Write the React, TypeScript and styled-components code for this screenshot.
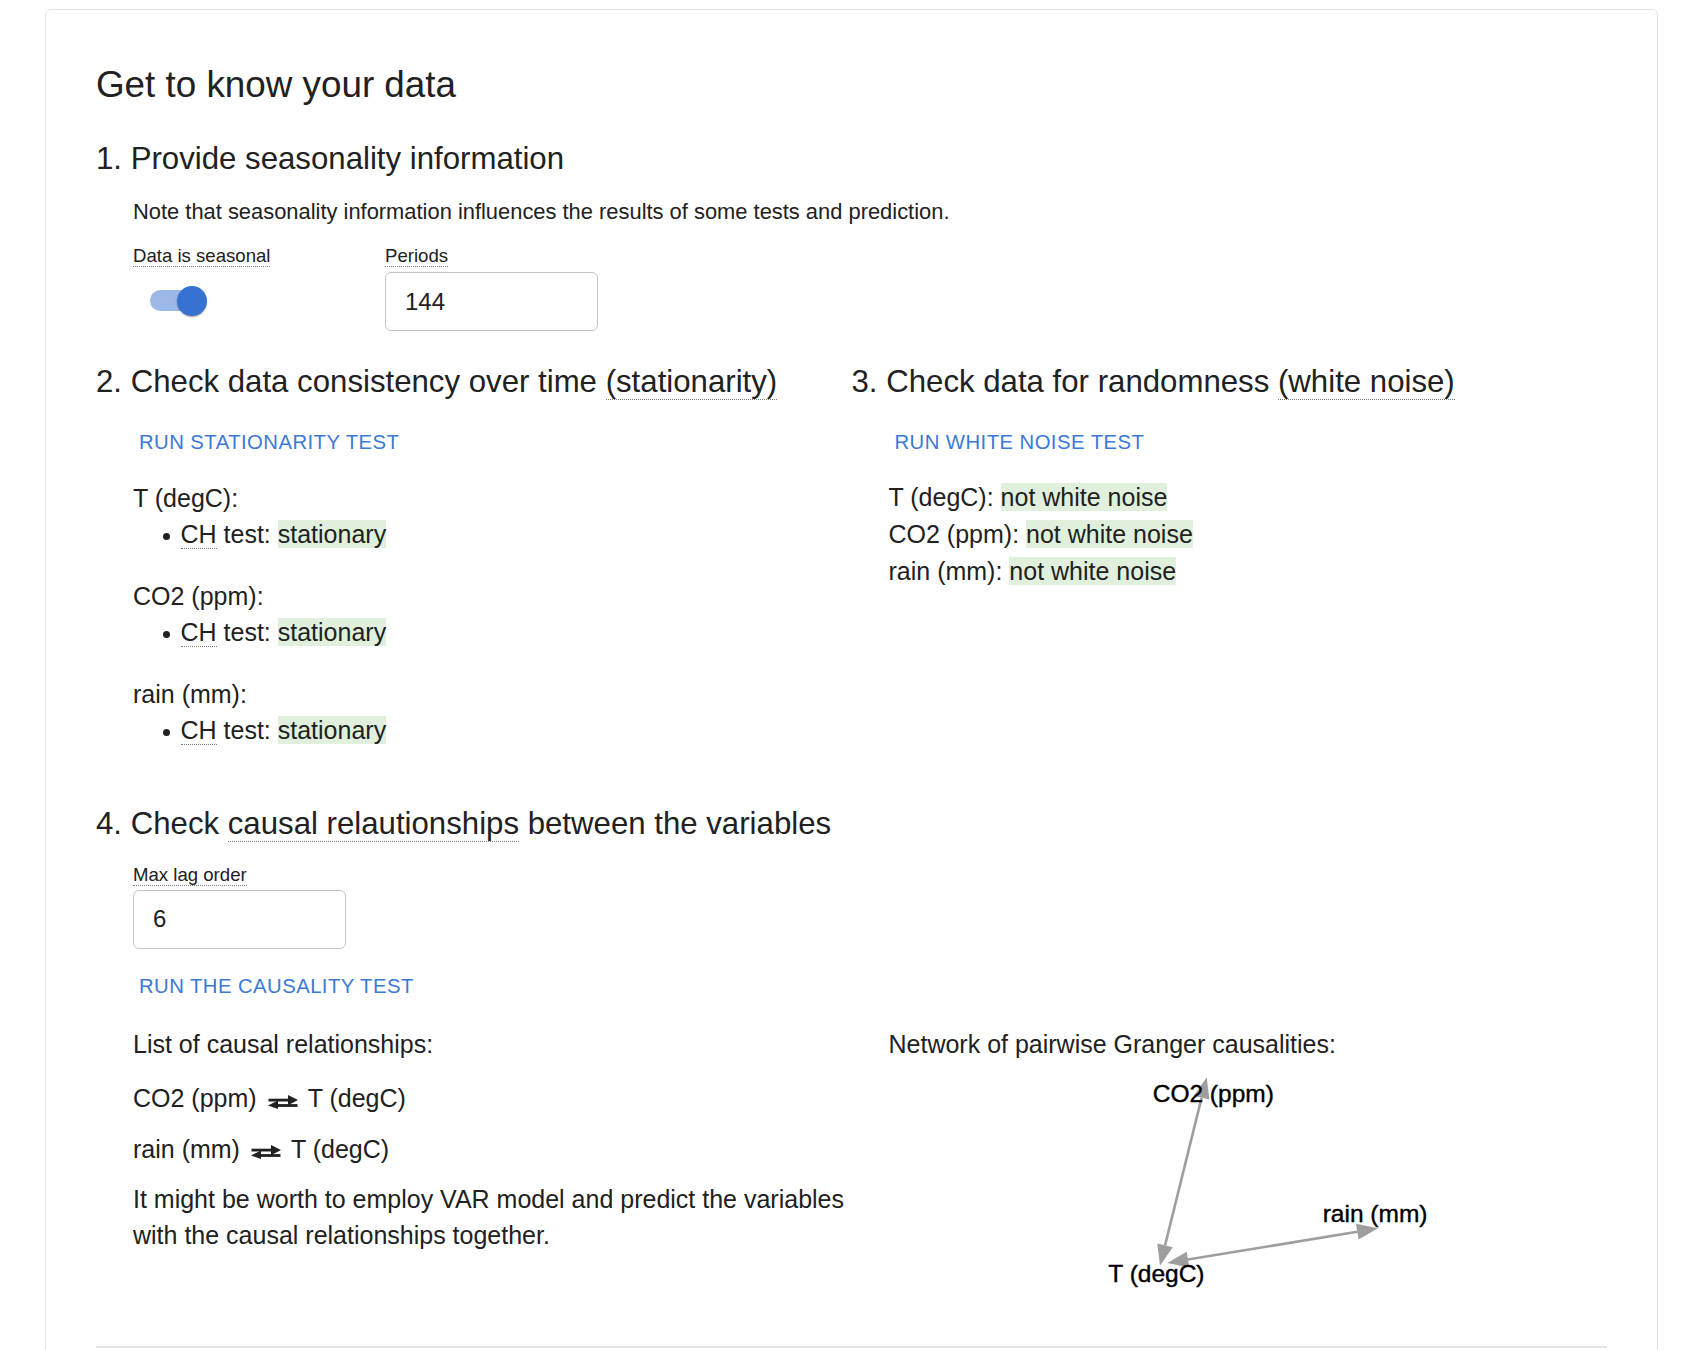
import React from "react";
import styled, { createGlobalStyle } from "styled-components";

const FONT = `"Liberation Sans", Arial, Helvetica, sans-serif`;

const GlobalStyle = createGlobalStyle`
  html, body {
    margin: 0;
    padding: 0;
    background: #ffffff;
    overflow: hidden;
  }
  body {
    font-family: ${FONT};
    color: #212121;
  }
  * { box-sizing: border-box; }
`;

const Page = styled.div`
  padding: 9px 48px 0 45px;
`;

const Card = styled.section`
  background: #fff;
  border: 1px solid #e3e3e3;
  border-radius: 6px;
  padding: 53px 50px 40px;
`;

const Title = styled.h1`
  margin: 0;
  font-size: 36.8px;
  line-height: 44px;
  font-weight: 400;
  color: #212121;
`;

const Heading = styled.h2<{ $mt: number }>`
  margin: ${(p) => p.$mt}px 0 0;
  font-size: 31.2px;
  line-height: 38px;
  font-weight: 400;
  color: #212121;
  white-space: nowrap;
`;

const Dotted = styled.span`
  border-bottom: 1px dotted #7d7d7d;
`;

const Note = styled.p`
  margin: 19px 0 0;
  padding-left: 37px;
  font-size: 21.9px;
  line-height: 30px;
`;

const FieldRow = styled.div<{ $mt: number }>`
  display: flex;
  align-items: flex-start;
  margin-top: ${(p) => p.$mt}px;
  padding-left: 37px;
`;

const Field = styled.div<{ $width?: number }>`
  display: flex;
  flex-direction: column;
  align-items: flex-start;
  width: ${(p) => (p.$width ? `${p.$width}px` : "auto")};
`;

const FieldLabel = styled.div`
  font-size: 18.6px;
  line-height: 22px;
  color: #212121;
`;

const SwitchTrack = styled.span`
  position: relative;
  display: block;
  width: 51px;
  height: 21px;
  margin: 23px 0 0 17px;
  border-radius: 10.5px;
  background: #9bb8e6;
`;

const SwitchThumb = styled.span`
  position: absolute;
  top: -4.5px;
  left: 27.3px;
  width: 30px;
  height: 30px;
  border-radius: 50%;
  background: #3672cf;
  box-shadow: 0 2px 1px -1px rgba(0, 0, 0, 0.2), 0 1px 1px rgba(0, 0, 0, 0.14),
    0 1px 3px rgba(0, 0, 0, 0.12);
`;

const TextInput = styled.input<{ $mt: number }>`
  display: block;
  margin-top: ${(p) => p.$mt}px;
  width: 213px;
  height: 59px;
  padding: 0 0 0 19px;
  border: 1px solid #c4c4c4;
  border-radius: 6px;
  background: #fff;
  font-family: ${FONT};
  font-size: 24px;
  color: #212121;
  outline: none;
`;

const Columns = styled.div<{ $mt: number }>`
  display: grid;
  grid-template-columns: 1fr 1fr;
  margin-top: ${(p) => p.$mt}px;
`;

const Column = styled.div``;

const TextButton = styled.button<{ $mt: number }>`
  display: block;
  margin: ${(p) => p.$mt}px 0 0 37px;
  padding: 6px;
  border: 0;
  background: none;
  color: #3b79d6;
  font-family: ${FONT};
  font-size: 20.3px;
  line-height: 30px;
  letter-spacing: 0.45px;
  text-transform: uppercase;
  cursor: pointer;
`;

const Body = styled.div<{ $mt: number; $lh?: number }>`
  margin-top: ${(p) => p.$mt}px;
  padding-left: 37px;
  font-size: 25px;
  line-height: ${(p) => p.$lh ?? 36}px;
  color: #212121;
`;

const VarBlock = styled.div`
  margin-bottom: 26px;
`;

const Bullets = styled.ul`
  list-style: none;
  margin: 0;
  padding-left: 30px;
`;

const Bullet = styled.li`
  &::before {
    content: "";
    display: inline-block;
    width: 7px;
    height: 7px;
    margin-right: 10.5px;
    border-radius: 50%;
    background: #212121;
    vertical-align: middle;
  }
`;

const Highlight = styled.span`
  background: #e0f0dc;
`;

const Line = styled.div``;

const Para = styled.p<{ $mt: number }>`
  margin: ${(p) => p.$mt}px 0 0;
`;

const SwapIcon = styled.svg`
  width: 30px;
  height: 14px;
  margin: 0 9.5px 0 11.5px;
  vertical-align: -1.5px;
`;

const Graph = styled.svg`
  display: block;
  margin-top: 6.3px;
  overflow: visible;
`;

const Divider = styled.div`
  margin-top: 37px;
  border-top: 2px solid #e4e4e4;
`;

const Swap = () => (
  <SwapIcon viewBox="0 0 30 14" aria-hidden="true">
    <rect x="0.5" y="3.7" width="21" height="2.8" fill="#212121" />
    <polygon points="20,0 30,5.1 20,10.2" fill="#212121" />
    <rect x="8.5" y="9.1" width="21" height="2.8" fill="#212121" />
    <polygon points="10,5.4 0,10.5 10,14" fill="#212121" />
  </SwapIcon>
);

const EDGE = "#9e9e9e";

const CausalGraph = () => (
  <Graph width="718" height="240" viewBox="0 0 718 240">
    <line x1="312.65" y1="28.68" x2="276.05" y2="176.32" stroke={EDGE} strokeWidth="2.6" />
    <polygon points="317.7,8.3 320.4,30.6 304.9,26.8" fill={EDGE} />
    <polygon points="271,196.7 283.8,178.2 268.3,174.4" fill={EDGE} />
    <line x1="299.02" y1="190.59" x2="468.28" y2="162.71" stroke={EDGE} strokeWidth="2.6" />
    <polygon points="489,159.3 469.58,170.6 466.98,154.8" fill={EDGE} />
    <polygon points="278.3,194 300.3,198.5 297.7,182.7" fill={EDGE} />
    <g fontFamily={FONT} fontSize="24.5" fill="#000" stroke="#000" strokeWidth="0.4">
      <text x="263.7" y="33.3">CO2 (ppm)</text>
      <text x="433.7" y="152.7">rain (mm)</text>
      <text x="219.3" y="212.7">T (degC)</text>
    </g>
  </Graph>
);

const variables = ["T (degC)", "CO2 (ppm)", "rain (mm)"];

export default function App() {
  return (
    <>
      <GlobalStyle />
      <Page>
        <Card>
          <Title>Get to know your data</Title>

          <Heading $mt={33.3}>1. Provide seasonality information</Heading>
          <Note>
            Note that seasonality information influences the results of some tests and
            prediction.
          </Note>
          <FieldRow $mt={18}>
            <Field $width={252}>
              <FieldLabel>
                <Dotted>Data is seasonal</Dotted>
              </FieldLabel>
              <SwitchTrack>
                <SwitchThumb />
              </SwitchTrack>
            </Field>
            <Field>
              <FieldLabel>
                <Dotted>Periods</Dotted>
              </FieldLabel>
              <TextInput $mt={5} defaultValue="144" />
            </Field>
          </FieldRow>

          <Columns $mt={31.7}>
            <Column>
              <Heading $mt={0}>
                2. Check data consistency over time <Dotted>(stationarity)</Dotted>
              </Heading>
              <TextButton $mt={20.4}>Run stationarity test</TextButton>
              <Body $mt={16.7}>
                {variables.map((v) => (
                  <VarBlock key={v}>
                    <Line>{v}:</Line>
                    <Bullets>
                      <Bullet>
                        <Dotted>CH</Dotted> test: <Highlight>stationary</Highlight>
                      </Bullet>
                    </Bullets>
                  </VarBlock>
                ))}
              </Body>
            </Column>
            <Column>
              <Heading $mt={0}>
                3. Check data for randomness <Dotted>(white noise)</Dotted>
              </Heading>
              <TextButton $mt={20.4}>Run white noise test</TextButton>
              <Body $mt={16} $lh={36.6}>
                {variables.map((v) => (
                  <Line key={v}>
                    {v}: <Highlight>not white noise</Highlight>
                  </Line>
                ))}
              </Body>
            </Column>
          </Columns>

          <Heading $mt={30.5}>
            4. Check <Dotted>causal relautionships</Dotted> between the variables
          </Heading>
          <FieldRow $mt={21.1}>
            <Field>
              <FieldLabel>
                <Dotted>Max lag order</Dotted>
              </FieldLabel>
              <TextInput $mt={4.3} defaultValue="6" />
            </Field>
          </FieldRow>
          <TextButton $mt={16.5}>Run the causality test</TextButton>

          <Columns $mt={18.9}>
            <Body $mt={0}>
              <Para $mt={0}>List of causal relationships:</Para>
              <Para $mt={17.7}>
                CO2 (ppm)
                <Swap />T (degC)
              </Para>
              <Para $mt={14.7}>
                rain (mm)
                <Swap />T (degC)
              </Para>
              <Para $mt={14}>
                It might be worth to employ VAR model and predict the variables with the causal
                relationships together.
              </Para>
            </Body>
            <Body $mt={0}>
              <Para $mt={0}>Network of pairwise Granger causalities:</Para>
              <CausalGraph />
            </Body>
          </Columns>

          <Divider />
        </Card>
      </Page>
    </>
  );
}
